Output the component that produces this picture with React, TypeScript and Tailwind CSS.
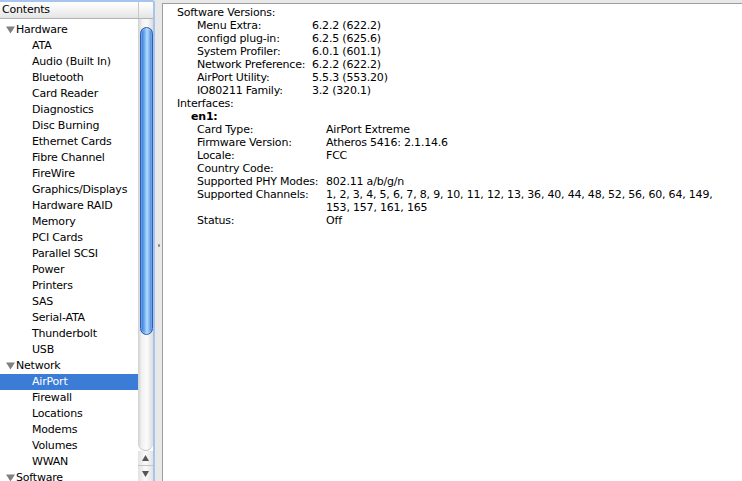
import React from 'react';

const hardware = [
  'ATA', 'Audio (Built In)', 'Bluetooth', 'Card Reader', 'Diagnostics', 'Disc Burning',
  'Ethernet Cards', 'Fibre Channel', 'FireWire', 'Graphics/Displays', 'Hardware RAID',
  'Memory', 'PCI Cards', 'Parallel SCSI', 'Power', 'Printers', 'SAS', 'Serial-ATA',
  'Thunderbolt', 'USB',
];
const network = ['AirPort', 'Firewall', 'Locations', 'Modems', 'Volumes', 'WWAN'];

const versions: [string, string][] = [
  ['Menu Extra:', '6.2.2 (622.2)'],
  ['configd plug-in:', '6.2.5 (625.6)'],
  ['System Profiler:', '6.0.1 (601.1)'],
  ['Network Preference:', '6.2.2 (622.2)'],
  ['AirPort Utility:', '5.5.3 (553.20)'],
  ['IO80211 Family:', '3.2 (320.1)'],
];

const Triangle = () => (
  <svg width="9" height="8" viewBox="0 0 9 8" className="mr-[1px] shrink-0">
    <polygon points="0,0.5 9,0.5 4.5,7.5" fill="#808080" />
  </svg>
);

const Row = ({ label, group, selected }: { label: string; group?: boolean; selected?: boolean }) => (
  <div
    className={`h-[16px] leading-[16px] flex items-center whitespace-nowrap ${
      selected ? 'bg-[#3b7cd7] text-white' : 'text-black'
    } ${group ? 'pl-[6px]' : 'pl-[32px]'}`}
  >
    {group && <Triangle />}
    {label}
  </div>
);

const Scrollbar = () => (
  <div className="w-[15px] flex flex-col shrink-0">
    {/* track */}
    <div className="h-[434px] rounded-b-[8px] bg-[linear-gradient(to_right,#cfcfcf,#f1f1f1_25%,#fbfbfb_60%,#dcdcdc)] pt-[8px] pl-[2px] border-b border-[#c4c4c4]">
      <div className="w-[13px] h-[308px] rounded-full border border-[#2a5cb0] bg-[linear-gradient(to_right,#2d6fd4,#6aa9ef_30%,#b5dbfb_55%,#7fb7f2_75%,#3775d6)] shadow-[inset_0_0_0_1px_rgba(255,255,255,0.25)]" />
    </div>
    {/* arrows */}
    <div className="h-[15px] flex items-center justify-center bg-[linear-gradient(to_right,#e2e2e2,#fafafa_50%,#e2e2e2)] border-b border-[#c4c4c4]">
      <svg width="7" height="6" viewBox="0 0 7 6">
        <polygon points="3.5,0 7,6 0,6" fill="#555" />
      </svg>
    </div>
    <div className="h-[15px] flex items-center justify-center bg-[linear-gradient(to_right,#e2e2e2,#fafafa_50%,#e2e2e2)]">
      <svg width="7" height="6" viewBox="0 0 7 6">
        <polygon points="0,0 7,0 3.5,6" fill="#555" />
      </svg>
    </div>
  </div>
);

export default function App() {
  return (
    <div className="w-[742px] h-[481px] bg-[#e8e8e8] flex overflow-hidden font-['DejaVu_Sans',sans-serif] text-[11px] tracking-[-0.2px]">
      {/* Sidebar */}
      <div className="w-[155px] shrink-0 flex flex-col bg-white border-t-2 border-r-2 border-[#a6c4ec] rounded-tr-[3px] overflow-hidden">
        <div className="h-[17px] flex border-b border-[#b3b3b3] bg-[linear-gradient(to_bottom,#ffffff,#f3f3f3_50%,#e4e4e4)] shrink-0">
          <div className="w-[138px] pl-[2px] leading-[15px] text-black">Contents</div>
          <div className="flex-1 border-l border-[#c8c8c8]" />
        </div>
        <div className="flex flex-1 min-h-0">
          <div className="flex-1 pt-[3px] overflow-hidden">
            <Row label="Hardware" group />
            {hardware.map(h => (
              <Row key={h} label={h} />
            ))}
            <Row label="Network" group />
            {network.map(n => (
              <Row key={n} label={n} selected={n === 'AirPort'} />
            ))}
            <Row label="Software" group />
          </div>
          <Scrollbar />
        </div>
      </div>

      {/* Splitter */}
      <div className="w-[7px] shrink-0 flex items-center justify-center">
        <div className="mt-[9px] w-[2px] h-[3px] bg-[#8a8a8a] rounded-[1px]" />
      </div>

      {/* Detail pane */}
      <div className="flex-1 mt-[3px] border-t border-l border-[#9e9e9e] bg-white pl-[14px] pt-[2px] leading-[13px] text-black whitespace-nowrap">
        <div>Software Versions:</div>
        <div className="pl-[20px] grid grid-cols-[115px_auto]">
          {versions.map(([k, v]) => (
            <React.Fragment key={k}>
              <div>{k}</div>
              <div>{v}</div>
            </React.Fragment>
          ))}
        </div>
        <div>Interfaces:</div>
        <div className="pl-[14px]">
          <div className="font-bold">en1:</div>
          <div className="pl-[6px] grid grid-cols-[129px_auto]">
            <div>Card Type:</div>
            <div>AirPort Extreme</div>
            <div>Firmware Version:</div>
            <div>Atheros 5416: 2.1.14.6</div>
            <div>Locale:</div>
            <div>FCC</div>
            <div>Country Code:</div>
            <div></div>
            <div>Supported PHY Modes:</div>
            <div>802.11 a/b/g/n</div>
            <div>Supported Channels:</div>
            <div>
              1, 2, 3, 4, 5, 6, 7, 8, 9, 10, 11, 12, 13, 36, 40, 44, 48, 52, 56, 60, 64, 149,
              <br />
              153, 157, 161, 165
            </div>
            <div>Status:</div>
            <div>Off</div>
          </div>
        </div>
      </div>
    </div>
  );
}
